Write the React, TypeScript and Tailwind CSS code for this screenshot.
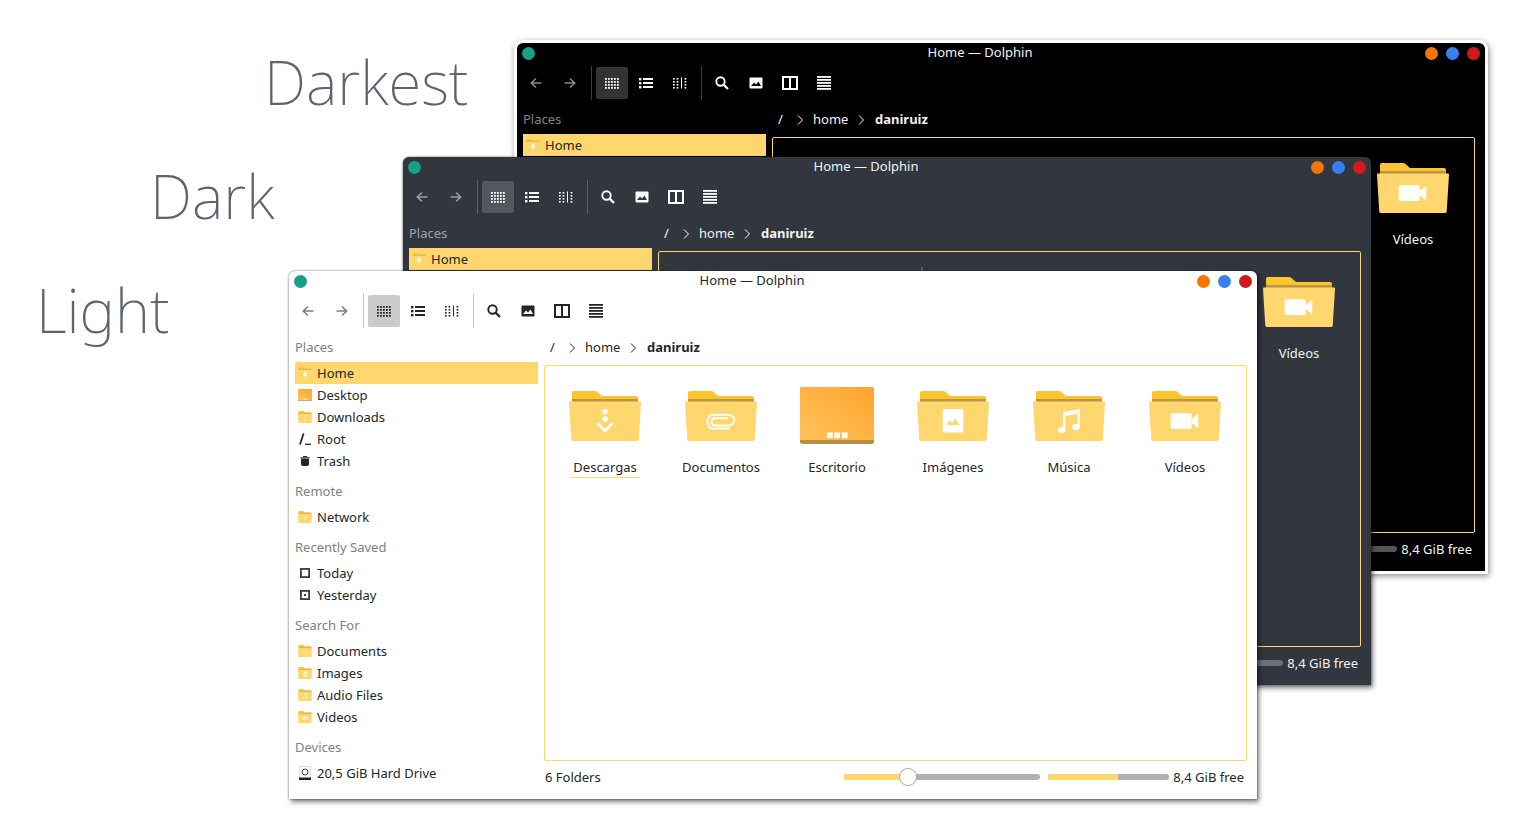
import React from "react";

type Kind = "light" | "dark" | "darkest";

const themes = {
  light: {
    bg: "bg-white",
    text: "text-[#232629]",
    label: "text-[#7f8081]",
    sep: "bg-[#c0c0c0]",
    active: "bg-[#cbcbcb]",
    arrow: "#7b7d7f",
    fg: "#232629",
    track: "bg-[#b0b0b0]",
    knob: "bg-white border-[#a8a8a8]",
    extra: "shadow-[0_0_2px_rgba(0,0,0,0.6),2px_3px_5px_rgba(0,0,0,0.5)]",
  },
  dark: {
    bg: "bg-[#31363f]",
    text: "text-[#f2f2f2]",
    label: "text-[#a2a5aa]",
    sep: "bg-[#5c6068]",
    active: "bg-[#53575f]",
    arrow: "#9a9da2",
    fg: "#ffffff",
    track: "bg-[#6d7078]",
    knob: "bg-white border-[#a8a8a8]",
    extra: "shadow-[0_0_2px_rgba(0,0,0,0.6),2px_3px_5px_rgba(0,0,0,0.5)]",
  },
  darkest: {
    bg: "bg-black",
    text: "text-[#f2f2f2]",
    label: "text-[#858585]",
    sep: "bg-[#3d3d3d]",
    active: "bg-[#333333]",
    arrow: "#858585",
    fg: "#ffffff",
    track: "bg-[#555555]",
    knob: "bg-white border-[#a8a8a8]",
    extra: "shadow-[0_0_0_3px_#ffffff,1px_2px_6px_3px_rgba(0,0,0,0.45)]",
  },
};

type Sym = "download" | "clip" | "image" | "music" | "video" | "home" | "none" | "net";

function Symbol({ s, small }: { s: Sym; small?: boolean }) {
  const c = small ? "#fff1c9" : "#ffffff";
  switch (s) {
    case "download":
      return (
        <g>
          <circle cx="36" cy="20.5" r="2.8" fill={c} />
          <circle cx="36" cy="28" r="2.8" fill={c} />
          <path d="M28.5 32 L36 40 L43.5 32" fill="none" stroke={c} strokeWidth="2.6" />
        </g>
      );
    case "clip":
      return (
        <path
          d="M45 37.5 H29 C24.5 37.5 22.4 34.5 22.4 30.5 C22.4 26.5 25 23.7 29 23.7 H42.5 C46.8 23.7 49.2 26.5 49.2 29.3 C49.2 32.3 46.8 34.5 43.5 34.5 H30.5 C28 34.5 26.5 32.8 26.5 30.8 C26.5 28.7 28 27.2 30.5 27.2 H43"
          fill="none"
          stroke={c}
          strokeWidth="2"
        />
      );
    case "image":
      return (
        <g>
          <rect x="25.7" y="18" width="20.6" height="23.6" rx="0.8" fill={c} />
          <path d="M29.5 34 L32.5 29.5 L35 32.5 L38.5 27.5 L42.5 34 Z" fill="#ffd76e" />
        </g>
      );
    case "music":
      return (
        <g fill={c}>
          <path d="M30 21 L46.7 18 V22.5 L32.3 25 V38.5 H30 Z" />
          <path d="M44.5 19 H46.7 V36 H44.5 Z" />
          <ellipse cx="28.6" cy="38.8" rx="3.8" ry="3.1" />
          <ellipse cx="42.9" cy="36" rx="3.8" ry="3.1" />
        </g>
      );
    case "video":
      return (
        <g fill={c}>
          <rect x="21.7" y="22.3" width="21" height="15.6" rx="1.5" />
          <path d="M42.7 28 L49.3 22.8 V37.4 L42.7 32 Z" />
        </g>
      );
    case "home":
      return <path d="M36 18 L47 28 H44 V40 H28 V28 H25 Z" fill="#ffffff" />;
    case "net":
      return <path d="M26 24 H46 L36 36 Z" fill={c} />;
    default:
      return null;
  }
}

function Folder({ s, w, h }: { s: Sym; w: number; h: number }) {
  return (
    <svg width={w} height={h} viewBox="0 0 72 50" preserveAspectRatio="none" className="shrink-0">
      <path
        d="M3 12 V2 C3 0.8 3.8 0 5 0 H26 C27 0 27.8 0.4 28.5 1 L33 5 H67 C68.3 5 69 5.8 69 7 V12 Z"
        fill="#ffc42e"
      />
      <rect x="3" y="8" width="66" height="4" fill="#b79645" />
      <path
        d="M1 10.5 H71 C71.7 10.5 72 11 72 11.6 L69.7 48.6 C69.6 49.5 69.1 50 68.3 50 H3.7 C2.9 50 2.4 49.5 2.3 48.6 L0 11.6 C0 11 0.3 10.5 1 10.5 Z"
        fill="#ffd76e"
      />
      <Symbol s={s} small={w < 30} />
    </svg>
  );
}

function DesktopIcon({ w, h, id }: { w: number; h: number; id: string }) {
  return (
    <svg width={w} height={h} viewBox="0 0 74 58" preserveAspectRatio="none" className="shrink-0">
      <defs>
        <linearGradient id={id} x1="0" y1="1" x2="1" y2="0">
          <stop offset="0" stopColor="#ffc35a" />
          <stop offset="1" stopColor="#ffa42e" />
        </linearGradient>
      </defs>
      <rect x="0" y="0" width="74" height="57" rx="2.5" fill="#bb8c45" />
      <path d="M2.5 0 H71.5 C73 0 74 1 74 2.5 V53 H0 V2.5 C0 1 1 0 2.5 0 Z" fill={`url(#${id})`} />
      <rect x="27" y="45.5" width="5.7" height="5.7" fill="#fff" />
      <rect x="34.4" y="45.5" width="5.7" height="5.7" fill="#fff" />
      <rect x="41.8" y="45.5" width="5.7" height="5.7" fill="#fff" />
    </svg>
  );
}

function GridIcon({ c }: { c: string }) {
  const d: React.ReactNode[] = [];
  for (let y = 0; y < 4; y++)
    for (let x = 0; x < 5; x++) d.push(<rect key={`${x}-${y}`} x={x * 3} y={y * 3 + 1} width="1.8" height="1.8" fill={c} />);
  return <svg width="14" height="12" viewBox="0 0 14 12">{d}</svg>;
}
function ListIcon({ c }: { c: string }) {
  return (
    <svg width="14" height="12" viewBox="0 0 14 12" fill={c}>
      {[1, 5, 9].map((y) => (
        <g key={y}>
          <rect x="0" y={y} width="2.4" height="2.4" />
          <rect x="4" y={y} width="10" height="2" />
        </g>
      ))}
    </svg>
  );
}
function ColsIcon({ c }: { c: string }) {
  const d: React.ReactNode[] = [];
  [0, 3.6, 11.6].forEach((x) =>
    [1, 4, 7, 10].forEach((y) => d.push(<rect key={`${x}-${y}`} x={x} y={y} width="1.7" height="1.6" fill={c} />))
  );
  return (
    <svg width="14" height="12" viewBox="0 0 14 12">
      {d}
      <rect x="8" y="0.5" width="1" height="11" fill={c} />
    </svg>
  );
}
function SearchIcon({ c }: { c: string }) {
  return (
    <svg width="14" height="14" viewBox="0 0 14 14" fill="none" stroke={c}>
      <circle cx="5.5" cy="5.5" r="4.2" strokeWidth="1.9" />
      <path d="M8.6 8.6 L13 13" strokeWidth="2.2" />
    </svg>
  );
}
function ImageIcon({ c, bg }: { c: string; bg: string }) {
  return (
    <svg width="14" height="12" viewBox="0 0 14 12">
      <rect x="0.5" y="0.5" width="13" height="11" rx="1" fill={c} />
      <path d="M2 9 L5 5.5 L7 7.5 L9.5 4.5 L12 9 Z" fill={bg} />
    </svg>
  );
}
function SplitIcon({ c }: { c: string }) {
  return (
    <svg width="16" height="14" viewBox="0 0 16 14" fill="none" stroke={c} strokeWidth="2">
      <rect x="1" y="1" width="14" height="12" />
      <path d="M8 1 V13" />
    </svg>
  );
}
function MenuIcon({ c }: { c: string }) {
  return (
    <svg width="14" height="14" viewBox="0 0 14 14" fill={c}>
      {[0, 3, 6, 9, 12].map((y) => (
        <rect key={y} x="0" y={y} width="14" height="1.8" />
      ))}
    </svg>
  );
}
function Arrow({ c, flip }: { c: string; flip?: boolean }) {
  return (
    <svg width="12" height="12" viewBox="0 0 12 12" fill="none" stroke={c} strokeWidth="1.6" className={flip ? "rotate-180" : ""}>
      <path d="M11.5 6 H1.5 M6 1.5 L1.3 6 L6 10.5" />
    </svg>
  );
}
function Chevron({ c }: { c: string }) {
  return (
    <svg width="7" height="10" viewBox="0 0 7 10" fill="none" stroke={c} strokeWidth="1">
      <path d="M1 0.5 L5.5 5 L1 9.5" />
    </svg>
  );
}

function Btn({ children, cls = "" }: { children: React.ReactNode; cls?: string }) {
  return <div className={`w-8 h-8 flex items-center justify-center rounded-[2px] ${cls}`}>{children}</div>;
}

function Row({ icon, text, selected }: { icon: React.ReactNode; text: string; selected?: boolean }) {
  return (
    <div className={`h-[22px] flex items-center ${selected ? "bg-[#ffd76e] text-[#232629]" : ""}`}>
      <div className="w-[20px] mr-[2px] flex items-center justify-center shrink-0">{icon}</div>
      <span className="pt-[2px]">{text}</span>
    </div>
  );
}

function Section({ label, labelCls, children, first }: { label: string; labelCls: string; children: React.ReactNode; first?: boolean }) {
  return (
    <div className={first ? "" : "mt-2"}>
      <div className={`h-[22px] mb-1 pt-[2px] flex items-center ${labelCls}`}>{label}</div>
      {children}
    </div>
  );
}

function Win({ kind, cls }: { kind: Kind; cls: string }) {
  const t = themes[kind];
  const covered = kind !== "light";
  const small = (s: Sym) => <Folder s={s} w={14} h={12} />;
  const items: { name: string; s?: Sym }[] = [
    { name: "Descargas", s: "download" },
    { name: "Documentos", s: "clip" },
    { name: "Escritorio" },
    { name: "Imágenes", s: "image" },
    { name: "Música", s: "music" },
    { name: "Vídeos", s: "video" },
  ];
  const shown = covered ? items.slice(5) : items;
  return (
    <div className={`absolute w-[968px] h-[528px] rounded-t-[6px] flex flex-col text-[13px] ${t.bg} ${t.text} ${t.extra} ${cls}`}>
      <div className="h-5 flex items-center pl-[5px] pr-[5px]">
        <div className="w-[13px] h-[13px] rounded-full bg-[#16a085]" />
        <div className="flex-1 text-center">Home — Dolphin</div>
        <div className="flex gap-2">
          <div className="w-[13px] h-[13px] rounded-full bg-[#f67400]" />
          <div className="w-[13px] h-[13px] rounded-full bg-[#3a7ff0]" />
          <div className="w-[13px] h-[13px] rounded-full bg-[#d41919]" />
        </div>
      </div>
      <div className="mt-1 h-8 flex items-center pl-[3px] gap-[2px]">
        <Btn><Arrow c={t.arrow} /></Btn>
        <Btn><Arrow c={t.arrow} flip /></Btn>
        <div className={`w-px h-[34px] ml-[3px] mr-[2px] ${t.sep}`} />
        <Btn cls={t.active}><GridIcon c={t.fg} /></Btn>
        <Btn><ListIcon c={t.fg} /></Btn>
        <Btn><ColsIcon c={t.fg} /></Btn>
        <div className={`w-px h-[34px] ml-[3px] mr-[2px] ${t.sep}`} />
        <Btn><SearchIcon c={t.fg} /></Btn>
        <Btn><ImageIcon c={t.fg} bg={kind === "light" ? "#ffffff" : kind === "dark" ? "#31363f" : "#000000"} /></Btn>
        <Btn><SplitIcon c={t.fg} /></Btn>
        <Btn><MenuIcon c={t.fg} /></Btn>
      </div>
      <div className="mt-[9px] flex flex-1 pl-[6px]">
        <div className="w-[243px] shrink-0">
          <Section first label="Places" labelCls={t.label}>
            <Row selected icon={small("home")} text="Home" />
            {!covered && (
              <>
                <Row icon={<DesktopIcon w={14} h={12} id={`d-${kind}`} />} text="Desktop" />
                <Row icon={small("download")} text="Downloads" />
                <Row
                  icon={
                    <svg width="12" height="12" viewBox="0 0 12 12" fill="none" stroke={t.fg}>
                      <path d="M4.6 0.5 L1 11.5" strokeWidth="1.8" />
                      <path d="M6 11.3 H12" strokeWidth="1.3" />
                    </svg>
                  }
                  text="Root"
                />
                <Row
                  icon={
                    <svg width="10" height="10" viewBox="0 0 10 10" fill={t.fg}>
                      <rect x="3" y="0" width="4" height="1" />
                      <rect x="0.5" y="1.3" width="9" height="1.3" />
                      <path d="M1 3 H9 V8 C9 9.2 8.2 10 7 10 H3 C1.8 10 1 9.2 1 8 Z" />
                    </svg>
                  }
                  text="Trash"
                />
              </>
            )}
          </Section>
          {!covered && (
            <>
              <Section label="Remote" labelCls={t.label}>
                <Row icon={small("net")} text="Network" />
              </Section>
              <Section label="Recently Saved" labelCls={t.label}>
                <Row
                  icon={
                    <svg width="10" height="10" viewBox="0 0 10 10" fill="none" stroke="#3a3d40" strokeWidth="1.8">
                      <rect x="0.9" y="0.9" width="8.2" height="8.2" />
                    </svg>
                  }
                  text="Today"
                />
                <Row
                  icon={
                    <svg width="10" height="10" viewBox="0 0 10 10" fill="none" stroke="#3a3d40" strokeWidth="1.8">
                      <rect x="0.9" y="0.9" width="8.2" height="8.2" />
                      <rect x="4" y="4" width="2" height="2" fill="#3a3d40" stroke="none" />
                    </svg>
                  }
                  text="Yesterday"
                />
              </Section>
              <Section label="Search For" labelCls={t.label}>
                <Row icon={small("clip")} text="Documents" />
                <Row icon={small("image")} text="Images" />
                <Row icon={small("music")} text="Audio Files" />
                <Row icon={small("video")} text="Videos" />
              </Section>
              <Section label="Devices" labelCls={t.label}>
                <Row
                  icon={
                    <svg width="12" height="14" viewBox="0 0 12 14">
                      <rect x="0.5" y="0.5" width="11" height="13" fill="#ffffff" stroke="#c9c9c9" strokeWidth="0.6" />
                      <circle cx="6" cy="6" r="3" fill="none" stroke="#444" strokeWidth="1" />
                      <rect x="0" y="11.5" width="12" height="2.5" fill="#222" />
                    </svg>
                  }
                  text="20,5 GiB Hard Drive"
                />
              </Section>
            </>
          )}
        </div>
        <div className="w-[703px] ml-[6px] flex flex-col">
          <div className="h-[22px] pt-[2px] flex items-center pl-[6px]">
            <span className="w-[19px]">/</span>
            <Chevron c={t.fg} />
            <span className="ml-[9px] w-[35px]">home</span>
            <span className="ml-[10px]"><Chevron c={t.fg} /></span>
            <span className="ml-[10px] font-bold">daniruiz</span>
          </div>
          <div className={`relative mt-[7px] h-[396px] border border-[#ffd76e] rounded-[2px] pl-[2px] pt-[21px] flex items-start ${covered ? "justify-start" : ""}`}>
            {kind === "dark" && <div className="absolute left-[262px] top-[15px] w-[2px] h-[5px] bg-[#5a5e66]" />}
            {covered && <div className="w-[580px] shrink-0" />}
            {shown.map((it) => (
              <div key={it.name} className="w-[116px] flex flex-col items-center">
                <div className="h-[58px] flex items-center justify-center">
                  {it.s ? <Folder s={it.s} w={72} h={50} /> : <DesktopIcon w={74} h={58} id={`big-${kind}`} />}
                </div>
                <div
                  className={`mt-[12px] h-[21px] px-[3px] pt-[2px] flex items-center whitespace-nowrap border-b ${
                    it.name === "Descargas" ? "border-[#ffd76e]" : "border-transparent"
                  }`}
                >
                  {it.name}
                </div>
              </div>
            ))}
          </div>
          <div className="mt-[5px] h-[22px] flex items-center pl-[1px] pr-[3px]">
            <span className="flex-1 pt-[2px]">{covered ? "" : "6 Folders"}</span>
            <div className={`relative w-[196px] h-[6px] rounded-full ${t.track}`}>
              <div className="w-[64px] h-full rounded-l-full bg-[#ffd76e]" />
              <div className={`absolute left-[55px] top-[-6px] w-[18px] h-[18px] rounded-full border ${t.knob}`} />
            </div>
            <div className={`ml-2 w-[121px] h-[6px] rounded-full ${t.track}`}>
              <div className="w-[70px] h-full rounded-l-full bg-[#ffd76e]" />
            </div>
            <span className="ml-1 pt-[2px]">8,4 GiB free</span>
          </div>
        </div>
      </div>
    </div>
  );
}

function Heading({ text, cls }: { text: string; cls: string }) {
  return (
    <div className={`absolute text-[60px] leading-none font-extralight text-[#5d6470] whitespace-nowrap ${cls}`}>{text}</div>
  );
}

export default function App() {
  return (
    <div className="relative w-[1528px] h-[839px] overflow-hidden bg-white font-['Noto_Sans','Open_Sans',sans-serif]">
      <Heading text="Darkest" cls="left-[264px] top-[52px]" />
      <Heading text="Dark" cls="left-[150px] top-[166px]" />
      <Heading text="Light" cls="left-[36px] top-[280px]" />
      <Win kind="darkest" cls="left-[517px] top-[43px]" />
      <Win kind="dark" cls="left-[403px] top-[157px]" />
      <Win kind="light" cls="left-[289px] top-[271px]" />
    </div>
  );
}
